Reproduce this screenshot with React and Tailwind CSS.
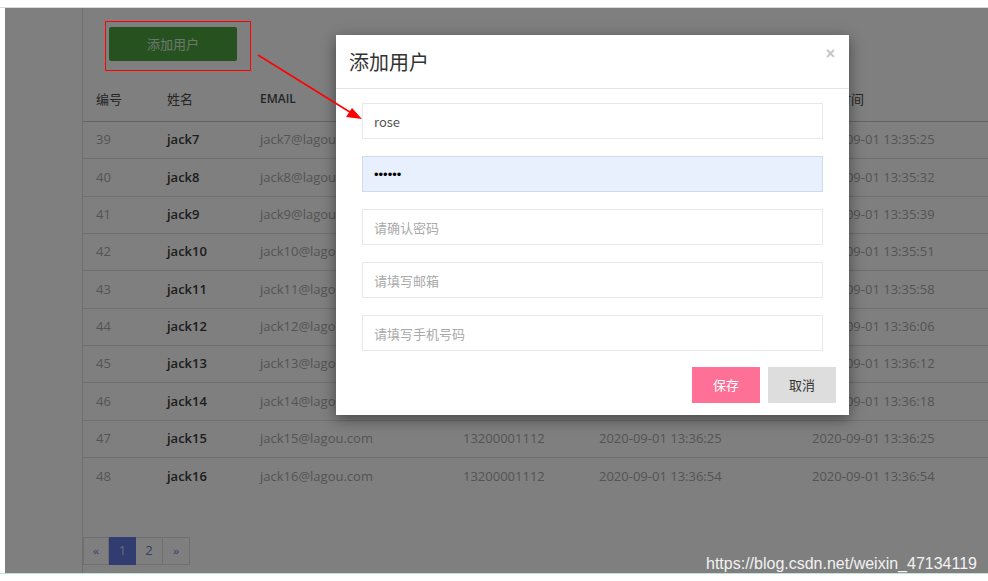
import { useState } from 'react'

const ROWS = [
  { id: 39, name: 'jack7', time: '2020-09-01 13:35:25' },
  { id: 40, name: 'jack8', time: '2020-09-01 13:35:32' },
  { id: 41, name: 'jack9', time: '2020-09-01 13:35:39' },
  { id: 42, name: 'jack10', time: '2020-09-01 13:35:51' },
  { id: 43, name: 'jack11', time: '2020-09-01 13:35:58' },
  { id: 44, name: 'jack12', time: '2020-09-01 13:36:06' },
  { id: 45, name: 'jack13', time: '2020-09-01 13:36:12' },
  { id: 46, name: 'jack14', time: '2020-09-01 13:36:18' },
  { id: 47, name: 'jack15', time: '2020-09-01 13:36:25' },
  { id: 48, name: 'jack16', time: '2020-09-01 13:36:54' },
]

const COLS = 'grid grid-cols-[71px_93px_203px_136px_213px_1fr]'
const SANS = "font-['Open_Sans','Noto_Sans_CJK_SC',sans-serif]"
const CJK = "font-['Noto_Sans_CJK_SC','Noto_Sans',sans-serif]"

function UserTable() {
  return (
    <div className={`${SANS} text-[13px]`}>
      <div className={`${COLS} h-[44px] pb-[2px] items-center border-b border-[#c8c8c8] text-[#4a4a4a]`}>
        <span className={`pl-[13px] ${CJK}`}>编号</span>
        <span className={`pl-[13px] ${CJK}`}>姓名</span>
        <span className="pl-[13px] font-semibold text-[12px]">EMAIL</span>
        <span className={`pl-[13px] ${CJK}`}>电话</span>
        <span className={`pl-[13px] ${CJK}`}>创建时间</span>
        <span className={`pl-[13px] ${CJK}`}>修改时间</span>
      </div>
      {ROWS.map(r => (
        <div key={r.id} className={`${COLS} h-[37.33px] items-center border-b border-[#dedede] last:border-b-0 text-[#a8a8a8]`}>
          <span className="pl-[13px]">{r.id}</span>
          <span className="pl-[13px] font-semibold text-[#3a3a3a]">{r.name}</span>
          <span className="pl-[13px]">{r.name}@lagou.com</span>
          <span className="pl-[13px]">13200001112</span>
          <span className="pl-[13px]">{r.time}</span>
          <span className="pl-[13px]">{r.time}</span>
        </div>
      ))}
    </div>
  )
}

function Pagination() {
  return (
    <div className={`flex h-[28px] text-[13px] ${SANS}`}>
      <span className="w-[26px] flex items-center justify-center border border-[#dedede] text-[#6b7ad0] text-[11px] font-['Liberation_Sans',sans-serif]">«</span>
      <span className="w-[27px] flex items-center justify-center bg-[#6378e0] text-white/70">1</span>
      <span className="w-[26px] flex items-center justify-center border-y border-[#dedede] text-[#6b7ad0]">2</span>
      <span className="w-[28px] flex items-center justify-center border border-[#dedede] text-[#6b7ad0] text-[11px] font-['Liberation_Sans',sans-serif]">»</span>
    </div>
  )
}

function Field({ placeholder, value, type = 'text', filled }) {
  return (
    <input
      type={type}
      placeholder={placeholder}
      defaultValue={value}
      readOnly
      className={`block w-full h-[36px] px-[11px] text-[13px] outline-none border placeholder:text-[#a9a9a9] ${
        filled
          ? "bg-[#e8f0fe] border-[#cfd9ea] text-black font-['Liberation_Sans',sans-serif] text-[11px]"
          : `bg-white border-[#e8e8e8] text-[#555] ${CJK}`
      }`}
    />
  )
}

function AddUserModal() {
  return (
    <div className="absolute left-[331px] top-[27px] w-[513px] bg-white shadow-[0_4px_14px_rgba(0,0,0,0.45)]">
      <div className="h-[54px] flex items-center justify-between pl-[13px] pr-[14px] border-b border-[#e5e5e5]">
        <h2 className={`text-[20px] text-[#333] ${CJK}`}>添加用户</h2>
        <span className="text-[16px] font-bold text-[#c4c4c4] -mt-[16px] font-['Liberation_Sans',sans-serif]">×</span>
      </div>
      <div className="px-[26px] pt-[14px] flex flex-col gap-[17px]">
        <Field value="rose" />
        <Field type="password" value="123456" filled />
        <Field placeholder="请确认密码" />
        <Field placeholder="请填写邮箱" />
        <Field placeholder="请填写手机号码" />
      </div>
      <div className={`flex justify-end gap-[8px] pr-[13px] pt-[16px] pb-[12px] text-[13px] ${CJK}`}>
        <button className="w-[68px] h-[36px] bg-[#ff7096] text-white">保存</button>
        <button className="w-[68px] h-[36px] bg-[#dddddd] text-[#333]">取消</button>
      </div>
    </div>
  )
}

export default function App() {
  const [open] = useState(true)

  return (
    <div className="w-[988px] h-[581px] bg-white overflow-hidden">
      <div className="h-[8px] border-b border-[#d9d9d9]" />
      <div className="relative ml-[5px] h-[565px] bg-white overflow-hidden">
        <div className="flex h-full">
          <aside className="w-[78px] shrink-0 border-r border-[#dedede]" />
          <main className="flex-1 flex flex-col">
            <div className="pl-[26px] pt-[19px] pb-[17px]">
              <button className={`w-[128px] h-[34px] rounded-[2px] bg-[#4aa43e] text-white/80 text-[13px] ${CJK}`}>
                添加用户
              </button>
            </div>
            <UserTable />
            <div className="mt-auto mb-[8px]">
              <Pagination />
            </div>
          </main>
        </div>

        {open && <div className="absolute inset-0 bg-black/50" />}
        {open && <AddUserModal />}

        {/* annotation drawn over the screenshot */}
        <div className="absolute left-[100px] top-[13px] w-[146px] h-[50px] border-[1.5px] border-[#f00]" />
        <svg className="absolute left-0 top-0" width="983" height="565">
          <line x1="253" y1="47" x2="348" y2="106" stroke="#f00" strokeWidth="1.5" />
          <polygon points="357,111 341,109 347,100" fill="#f00" />
        </svg>
        <span className="absolute left-[701px] top-[544px] text-[16px] text-[#f2f2f2] font-['Liberation_Sans',sans-serif]">
          https://blog.csdn.net/weixin_47134119
        </span>
      </div>
      <div className="h-[8px] border-t border-[#bfe3d6]" />
    </div>
  )
}
